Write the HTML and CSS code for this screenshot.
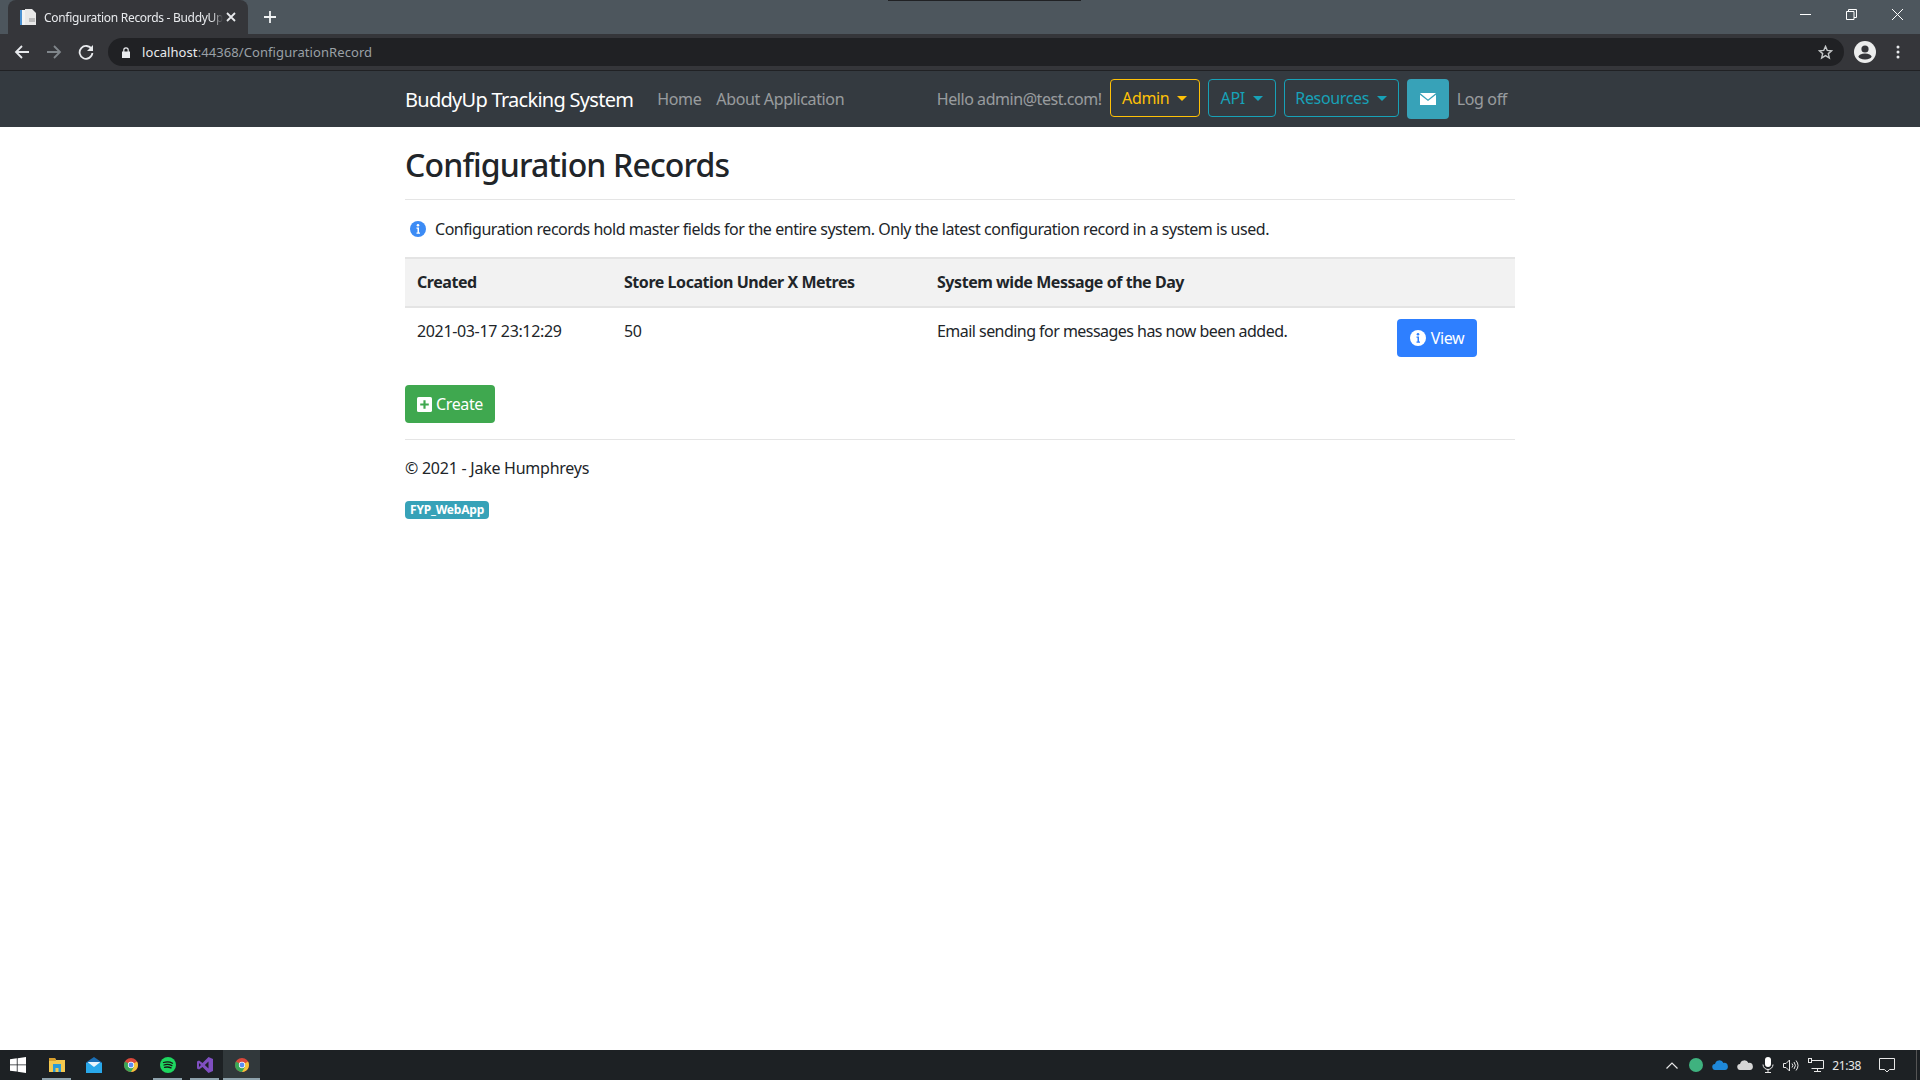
FILE: index.html
```html
<!DOCTYPE html>
<html lang="en">
<head>
    <meta charset="UTF-8">
    <meta name="viewport" content="width=device-width, initial-scale=1.0">
    <title>Configuration Records - BuddyUp</title>
    <link rel="stylesheet" href="styles.css">
</head>
<body>

<!-- Browser chrome -->
<div class="tabstrip">
    <div class="notch"></div>
    <div class="tab">
        <svg class="favicon" width="16" height="16" viewBox="0 0 16 16"><path d="M0 1h5v15H0z" fill="#f3f3f3"/><path d="M0 1h2v15H0z" fill="#4a90d0"/><path d="M5 0h7l4 4v12H5z" fill="#e8e8e8"/><path d="M9 9h6v4H9z" fill="#bdbdbd"/></svg>
        <span class="tab-title">Configuration Records - BuddyUp</span>
        <svg class="tab-close" width="10" height="10" viewBox="0 0 10 10"><path d="M1 1l8 8M9 1l-8 8" stroke="#e8eaed" stroke-width="1.8"/></svg>
    </div>
    <svg class="new-tab" width="12" height="12" viewBox="0 0 12 12"><path d="M6 0v12M0 6h12" stroke="#f1f3f4" stroke-width="1.8"/></svg>
    <div class="window-controls">
        <svg width="11" height="11" viewBox="0 0 11 11"><path d="M0 5.500h11" stroke="#fff"/></svg>
        <svg width="11" height="11" viewBox="0 0 11 11"><path d="M.5 2.500h7.500v8H.5zM2.500 2.500V.5h8v8H8" fill="none" stroke="#fff"/></svg>
        <svg width="11" height="11" viewBox="0 0 11 11"><path d="M0 0l11 11M11 0L0 11" stroke="#fff"/></svg>
    </div>
</div>

<div class="toolbar">
    <svg class="tool" width="16" height="16" viewBox="0 0 16 16"><path d="M15 8H2M8 2L2 8l6 6" fill="none" stroke="#e8eaed" stroke-width="1.8"/></svg>
    <svg class="tool" width="16" height="16" viewBox="0 0 16 16"><path d="M1 8h13M8 2l6 6-6 6" fill="none" stroke="#80868b" stroke-width="1.8"/></svg>
    <svg class="tool" width="16" height="16" viewBox="0 0 16 16"><path d="M13.600 5.200A6.400 6.400 0 1 0 14.400 9" fill="none" stroke="#e8eaed" stroke-width="1.8"/><path d="M15 1v6H9z" fill="#e8eaed"/></svg>
    <div class="omnibox">
        <svg width="8" height="11" viewBox="0 0 8 11"><path d="M0 4.500h8V11H0z" fill="#e8eaed"/><path d="M1.800 5V3a2.200 2.200 0 0 1 4.400 0v2" fill="none" stroke="#e8eaed" stroke-width="1.200"/></svg>
        <span class="url"><b>localhost</b>:44368/ConfigurationRecord</span>
        <svg class="star" width="15" height="15" viewBox="0 0 16 16"><path d="M8 1.500l1.900 4.300 4.600.4-3.500 3 1.100 4.600L8 11.400l-4.100 2.400L5 9.200l-3.500-3 4.600-.4z" fill="none" stroke="#c4c7c8" stroke-width="1.500"/></svg>
    </div>
    <svg class="avatar" width="22" height="22" viewBox="0 0 22 22"><circle cx="11" cy="11" r="11" fill="#eceded"/><circle cx="11" cy="8" r="3.600" fill="#35363a"/><ellipse cx="11" cy="15.500" rx="6.500" ry="3" fill="#35363a"/></svg>
    <svg class="dots" width="4" height="14" viewBox="0 0 4 14"><circle cx="2" cy="2" r="1.500" fill="#e8eaed"/><circle cx="2" cy="7" r="1.500" fill="#e8eaed"/><circle cx="2" cy="12" r="1.500" fill="#e8eaed"/></svg>
</div>

<!-- Site nav -->
<nav class="navbar">
    <div class="container nav-inner">
        <a class="brand">BuddyUp Tracking System</a>
        <a class="nav-link first">Home</a>
        <a class="nav-link">About Application</a>
        <div class="nav-right">
            <span class="nav-link hello">Hello admin@test.com!</span>
            <button class="btn-outline warning w-admin">Admin<i class="caret"></i></button>
            <button class="btn-outline info w-api">API<i class="caret"></i></button>
            <button class="btn-outline info w-res">Resources<i class="caret"></i></button>
            <button class="btn-mail">
                <svg width="16" height="12" viewBox="0 0 16 12"><path d="M0 0h16L8 6.500z" fill="#fff"/><path d="M0 1.800l8 6.200 8-6.200V12H0z" fill="#fff"/></svg>
            </button>
            <span class="nav-link logoff">Log off</span>
        </div>
    </div>
</nav>

<!-- Page -->
<main class="container content">
    <h1>Configuration Records</h1>
    <hr class="title-rule">

    <p class="note">
        <svg class="info-icon" width="16" height="16" viewBox="0 0 16 16"><circle cx="8" cy="8" r="8" fill="#3b8bf5"/><path d="M6.500 6.500h2.500v5h1v1.200H6.500v-1.200h1v-3.800h-1z" fill="#fff"/><circle cx="8" cy="4.300" r="1.300" fill="#fff"/></svg>
        Configuration records hold master fields for the entire system. Only the latest configuration record in a system is used.
    </p>

    <table>
        <thead>
            <tr>
                <th class="col-created">Created</th>
                <th class="col-store">Store Location Under X Metres</th>
                <th class="col-motd">System wide Message of the Day</th>
                <th class="col-actions"></th>
            </tr>
        </thead>
        <tbody>
            <tr>
                <td>2021-03-17 23:12:29</td>
                <td>50</td>
                <td class="motd">Email sending for messages has now been added.</td>
                <td class="actions">
                    <button class="btn btn-view">
                        <svg width="16" height="16" viewBox="0 0 16 16"><circle cx="8" cy="8" r="8" fill="#fff"/><path d="M6.500 6.500h2.500v5h1v1.200H6.500v-1.200h1v-3.800h-1z" fill="#2e7fff"/><circle cx="8" cy="4.300" r="1.300" fill="#2e7fff"/></svg>
                        View
                    </button>
                </td>
            </tr>
        </tbody>
    </table>

    <button class="btn btn-create">
        <svg width="15" height="15" viewBox="0 0 14 14"><rect width="14" height="14" rx="1.500" fill="#fff"/><path d="M7 3v8M3 7h8" stroke="#3fa84f" stroke-width="2"/></svg>
        Create
    </button>

    <hr class="foot-rule">
    <p class="copyright">© 2021 - Jake Humphreys</p>
    <span class="badge">FYP_WebApp</span>
</main>

<!-- Windows taskbar -->
<div class="taskbar">
    <div class="task start">
        <svg width="16" height="16" viewBox="0 0 16 16"><path d="M0 2.300l6.800-1v6.200H0zM7.600 1.200L16 0v7.500H7.600zM0 8.300h6.800v6.300L0 13.700zM7.600 8.300H16V16l-8.400-1.200z" fill="#fff"/></svg>
    </div>
    <div class="task open">
        <svg width="16" height="14" viewBox="0 0 16 14"><path d="M0 0h6l1 2h9v12H0z" fill="#f4c84e"/><path d="M0 0h6l1 3H0z" fill="#d89e2c"/><path d="M4 6h8v8h-2.500v-4h-3v4H4z" fill="#2a9bd8"/></svg>
    </div>
    <div class="task">
        <svg width="16" height="16" viewBox="0 0 16 16"><path d="M8 0l8 5.500V16H0V5.500z" fill="#1b6fb5"/><path d="M0 6h16v10H0z" fill="#29a8ea"/><path d="M1.500 5h13L8 10z" fill="#e9f5fc"/></svg>
    </div>
    <div class="task">
        <svg width="14" height="14" viewBox="0 0 16 16"><use href="#chrome"/></svg>
    </div>
    <div class="task open">
        <svg width="16" height="16" viewBox="0 0 16 16"><circle cx="8" cy="8" r="8" fill="#1ed760"/><path d="M3.500 5.500c3-1 6.500-.8 9 .7M4 8c2.500-.8 5.500-.6 7.800.6M4.500 10.400c2-.6 4.500-.5 6.500.5" fill="none" stroke="#191414" stroke-width="1.300" stroke-linecap="round"/></svg>
    </div>
    <div class="task open">
        <svg width="16" height="16" viewBox="0 0 16 16"><path d="M11.500 0L16 2v12l-4.500 2-6-6L2 12.500 0 11.500v-7l2-1L5.500 6z" fill="#7f4fc0"/><path d="M11.500 4.500L7.800 8l3.700 3.500zM2 6v4l2-2z" fill="#1d2124"/></svg>
    </div>
    <div class="task open active">
        <svg width="14" height="14" viewBox="0 0 16 16"><use href="#chrome"/></svg>
    </div>

    <div class="tray">
        <svg class="t-caret" width="12" height="7" viewBox="0 0 12 7"><path d="M.5 6.500L6 1l5.500 5.500" fill="none" stroke="#e8e8e8" stroke-width="1.200"/></svg>
        <svg class="t-item" width="14" height="14" viewBox="0 0 14 14"><circle cx="7" cy="7" r="7" fill="#3fb27f"/></svg>
        <svg class="t-item" width="16" height="10" viewBox="0 0 16 10"><path d="M3.500 10a3 3 0 0 1-.5-6 4.500 4.500 0 0 1 8.500-1A3.500 3.500 0 0 1 13 10z" fill="#1e88d9"/></svg>
        <svg class="t-item" width="16" height="10" viewBox="0 0 16 10"><path d="M3.500 10a3 3 0 0 1-.5-6 4.500 4.500 0 0 1 8.500-1A3.500 3.500 0 0 1 13 10z" fill="#d6d6d6"/></svg>
        <svg class="t-item" width="12" height="16" viewBox="0 0 12 16"><rect x="3" y="0" width="6" height="10" rx="3" fill="#fff"/><path d="M1 7.500a5 5 0 0 0 10 0M6 12.500V15M3 15.500h6" fill="none" stroke="#e8e8e8"/></svg>
        <svg class="t-item" width="16" height="13" viewBox="0 0 16 13"><path d="M.5 4.500h2.500L6.500 1v11L3 8.500H.500zM9 4.500a3 3 0 0 1 0 4M11 3a5.500 5.500 0 0 1 0 7M13 1.500a8 8 0 0 1 0 10" fill="none" stroke="#e8e8e8"/></svg>
        <svg class="t-item" width="16" height="14" viewBox="0 0 16 14"><path d="M3.500 2.500h12v8h-12M9.500 10.500v2.500M6 13.500h7" fill="none" stroke="#e8e8e8"/><rect x=".5" y=".5" width="3" height="4" fill="none" stroke="#e8e8e8"/></svg>
        <span class="clock">21:38</span>
        <svg class="t-note" width="16" height="15" viewBox="0 0 16 15"><path d="M.5.500h15v11h-5l-2.500 2.500-2.500-2.500h-5z" fill="none" stroke="#e8e8e8"/></svg>
        <div class="show-desktop"></div>
    </div>
</div>

<svg width="0" height="0" class="defs">
    <symbol id="chrome" viewBox="0 0 16 16">
        <circle cx="8" cy="8" r="8" fill="#d9483b"/>
        <path d="M8 8l6.900-4A8 8 0 0 1 8 16L1.100 12z" fill="#f5c33b"/>
        <path d="M8 8L1.100 4A8 8 0 0 0 8 16l3.400-6z" fill="#3aa757"/>
        <circle cx="8" cy="8" r="3.600" fill="#fff"/>
        <circle cx="8" cy="8" r="2.800" fill="#5a8df5"/>
    </symbol>
</svg>

</body>
</html>
```

FILE: styles.css
```css
* {
    box-sizing: border-box;
}
html, body {
    height: 100%;
}
body {
    margin: 0;
    display: flex;
    flex-direction: column;
    height: 1080px;
    overflow: hidden;
    font-family: "Noto Sans", "Open Sans", Arial, sans-serif;
    font-size: 16px;
    color: #212529;
    background-color: #fff;
}
.defs {
    position: absolute;
}

/* browser chrome */
.tabstrip {
    position: relative;
    display: flex;
    align-items: flex-end;
    height: 34px;
    padding-left: 8px;
    background-color: #4d565d;
    flex-shrink: 0;
}
.notch {
    position: absolute;
    top: 0;
    left: 888px;
    width: 193px;
    height: 1px;
    background-color: #202124;
}
.tab {
    display: flex;
    align-items: center;
    width: 240px;
    height: 34px;
    padding: 0 12px;
    border-radius: 8px 8px 0 0;
    background-color: #35363a;
}
.favicon {
    flex-shrink: 0;
}
.tab-title {
    flex: 1;
    margin-left: 8px;
    white-space: nowrap;
    font-size: 12px;
    letter-spacing: -0.3px;
    color: #e8eaed;
    -webkit-mask-image: linear-gradient(to right, #000 94%, transparent);
    mask-image: linear-gradient(to right, #000 94%, transparent);
}
.tab-close {
    flex-shrink: 0;
    margin-left: 3px;
}
.new-tab {
    margin: 0 0 11px 16px;
}
.window-controls {
    display: flex;
    gap: 35px;
    margin-left: auto;
    margin-right: 17px;
    margin-bottom: 14px;
}
.toolbar {
    display: flex;
    align-items: center;
    height: 37px;
    padding: 0 0 0 14px;
    border-bottom: 1px solid #202124;
    background-color: #35363a;
    flex-shrink: 0;
}
.tool {
    margin-right: 16px;
}
.omnibox {
    display: flex;
    align-items: center;
    width: 1736px;
    height: 28px;
    margin-left: -2px;
    padding: 0 11px 0 14px;
    border-radius: 14px;
    background-color: #202124;
}
.url {
    margin-left: 12px;
    font-size: 13px;
    letter-spacing: 0.08px;
    color: #9aa0a6;
}
.url b {
    font-weight: 400;
    color: #e8eaed;
}
.star {
    margin-left: auto;
}
.avatar {
    margin-left: 10px;
}
.dots {
    margin-left: 20px;
}

/* site nav */
.container {
    width: 1140px;
    margin: 0 auto;
    padding: 0 15px;
}
.navbar {
    height: 56px;
    background-color: #343a40;
    flex-shrink: 0;
}
.nav-inner {
    display: flex;
    align-items: center;
    height: 100%;
}
.brand {
    font-size: 20px;
    letter-spacing: -0.72px;
    color: #fff;
}
.nav-link {
    margin-left: 15px;
    font-size: 16px;
    letter-spacing: -0.35px;
    color: rgba(255, 255, 255, 0.5);
}
.nav-link.first {
    margin-left: 24px;
}
.nav-right {
    display: flex;
    align-items: center;
    gap: 8px;
    margin-left: auto;
    margin-right: 8px;
}
.nav-right .nav-link {
    margin-left: 0;
}
.nav-right .hello {
    letter-spacing: -0.45px;
}
.btn-outline {
    display: flex;
    align-items: center;
    justify-content: center;
    height: 38px;
    margin-bottom: 2px;
    padding: 0;
    border: 1px solid;
    border-radius: 4px;
    background: transparent;
    font: inherit;
    letter-spacing: -0.35px;
}
.btn-outline.warning {
    border-color: #ffc107;
    color: #ffc107;
}
.btn-outline.info {
    border-color: #17a2b8;
    color: #17a2b8;
}
.w-admin {
    width: 90px;
}
.w-api {
    width: 68px;
}
.w-res {
    width: 115px;
}
.caret {
    width: 0;
    height: 0;
    margin-left: 8px;
    border-top: 5px solid currentColor;
    border-left: 5px solid transparent;
    border-right: 5px solid transparent;
}
.btn-mail {
    display: flex;
    align-items: center;
    justify-content: center;
    width: 42px;
    height: 40px;
    padding: 0;
    border: none;
    border-radius: 4px;
    background-color: #37a2b8;
}

/* page */
.content {
    flex: 1;
    padding-top: 14px;
}
h1 {
    margin: 0;
    font-size: 32px;
    font-weight: 500;
    line-height: 48px;
    letter-spacing: -0.85px;
}
hr {
    margin: 0;
    border: 0;
    border-top: 1px solid #e5e5e5;
}
.title-rule {
    margin-top: 10px;
}
.note {
    display: flex;
    align-items: center;
    gap: 9px;
    height: 24px;
    margin: 17px 0 16px;
    padding-left: 5px;
    letter-spacing: -0.46px;
}
.info-icon {
    flex-shrink: 0;
}
table {
    width: 100%;
    border-collapse: collapse;
    table-layout: fixed;
}
th, td {
    padding: 12px;
    text-align: left;
    vertical-align: top;
    letter-spacing: -0.35px;
}
th {
    height: 49px;
    border-top: 2px solid #e4e4e4;
    border-bottom: 2px solid #e4e4e4;
    background-color: #f2f2f2;
    font-weight: 700;
    letter-spacing: -0.45px;
}
.col-created {
    width: 207px;
}
.col-store {
    width: 313px;
}
.col-motd {
    width: 460px;
}
td.motd {
    letter-spacing: -0.54px;
}
.btn {
    display: flex;
    align-items: center;
    justify-content: center;
    gap: 5px;
    height: 38px;
    padding: 0;
    border: none;
    border-radius: 4px;
    font: inherit;
    letter-spacing: -0.35px;
    color: #fff;
}
.btn-view {
    width: 80px;
    margin-top: -1px;
    background-color: #2e7fff;
}
.btn-create {
    gap: 4px;
    width: 90px;
    margin-top: 16px;
    background-color: #3fa84f;
}
.foot-rule {
    margin-top: 16px;
}
.copyright {
    margin: 16px 0 0;
    line-height: 24px;
    letter-spacing: -0.25px;
}
.badge {
    display: inline-block;
    height: 18px;
    margin-top: 21px;
    padding: 0 5px;
    border-radius: 4px;
    background-color: #37a2b8;
    font-size: 12px;
    font-weight: 700;
    line-height: 18px;
    letter-spacing: -0.2px;
    color: #fff;
}

/* taskbar */
.taskbar {
    display: flex;
    align-items: stretch;
    height: 30px;
    background-color: #1d2124;
    flex-shrink: 0;
}
.task {
    position: relative;
    display: flex;
    align-items: center;
    justify-content: center;
    width: 37px;
}
.task.start {
    width: 36px;
    margin-right: 2px;
}
.task.open::after {
    content: "";
    position: absolute;
    left: 4px;
    right: 4px;
    bottom: 0;
    height: 2px;
    background-color: #8fa3ad;
}
.task.active {
    background-color: #31383b;
}
.task.active::after {
    left: 0;
    right: 0;
}
.tray {
    display: flex;
    align-items: center;
    margin-left: auto;
}
.t-caret {
    margin-right: 11px;
}
.t-item {
    margin-right: 9px;
}
.clock {
    margin: 0 18px 0 -1px;
    font-size: 12px;
    letter-spacing: -0.4px;
    color: #e8e8e8;
}
.t-note {
    margin-right: 21px;
}
.show-desktop {
    width: 1px;
    height: 30px;
    margin-right: 3px;
    background-color: #555;
}
```
